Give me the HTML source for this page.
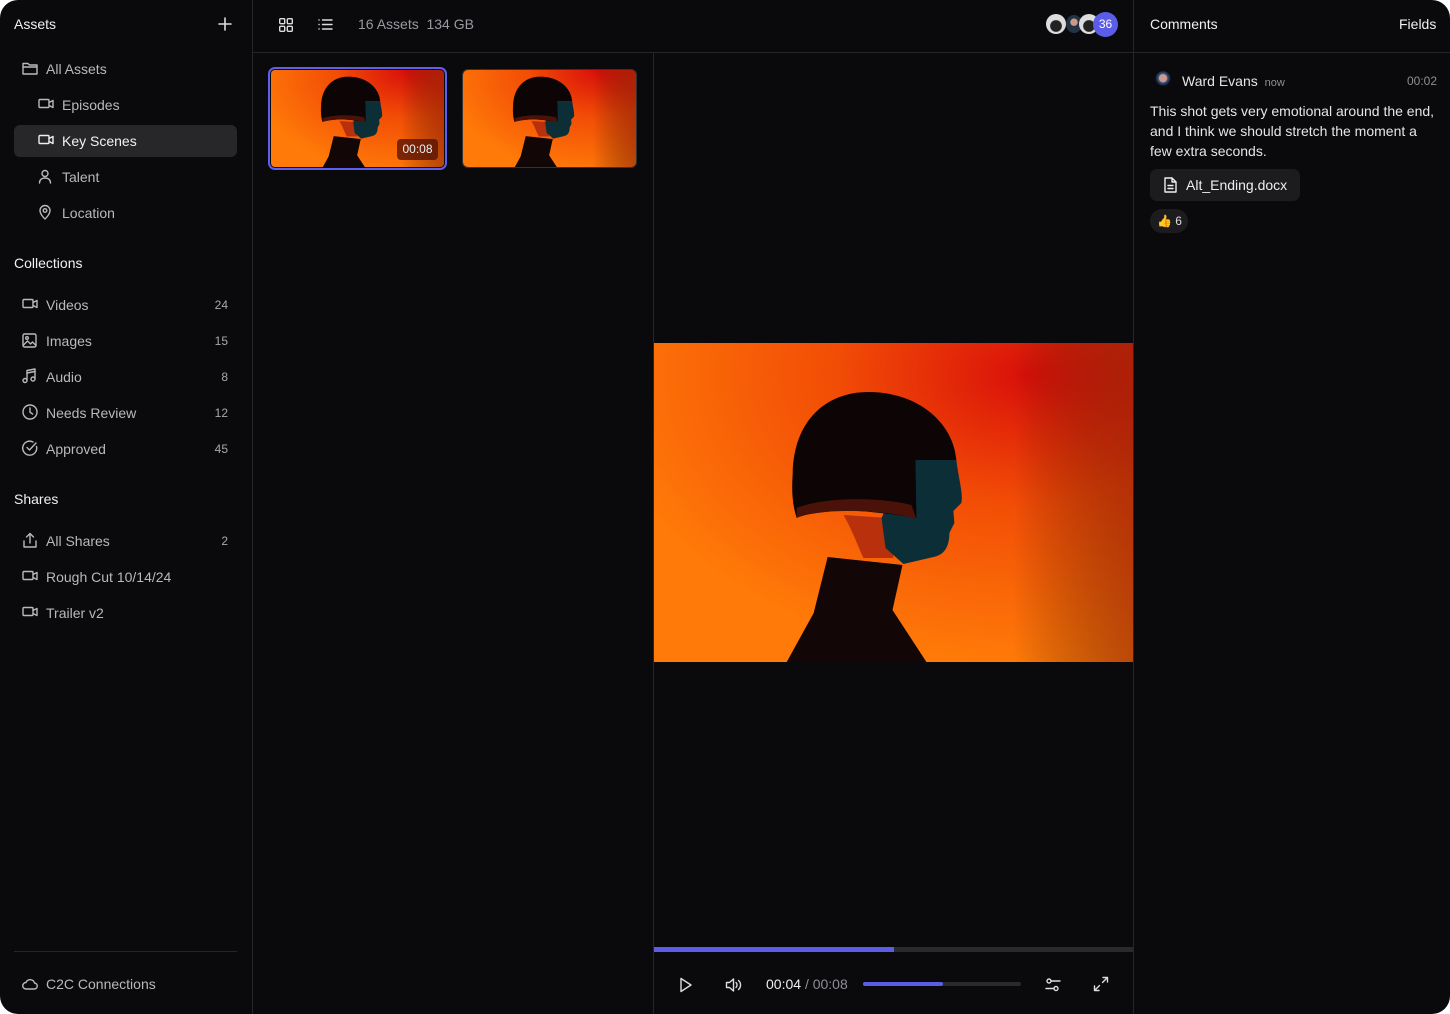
<!DOCTYPE html>
<html><head><meta charset="utf-8"><style>
*{box-sizing:border-box;margin:0;padding:0}
html,body{width:1450px;height:1014px;background:#fff;overflow:hidden}
body{font-family:"Liberation Sans",sans-serif;color:#e6e6e8}
.app{position:absolute;left:0;top:0;width:1450px;height:1014px;background:#0a0a0c;border-radius:18px;overflow:hidden}
.abs{position:absolute}
.side{left:0;top:0;width:253px;height:1014px;border-right:1px solid #26262a}
.t{position:absolute;font-size:14px;color:#b9b9bd;white-space:nowrap}
.h{position:absolute;font-size:14px;color:#f0f0f2}
.ic{position:absolute;fill:none;stroke:#b9b9bd;stroke-width:1.4;stroke-linecap:round;stroke-linejoin:round}
.n{position:absolute;right:24px;font-size:12px;color:#a8a8ad}
.line{position:absolute;background:#26262a}
</style></head><body><div class="app">
<svg width="0" height="0" style="position:absolute"><defs>
<radialGradient id="rg" cx="0.78" cy="0.1" r="0.9"><stop offset="0" stop-color="#d9100a"/><stop offset="0.45" stop-color="#f24d06"/><stop offset="1" stop-color="#ff7a08"/></radialGradient>
<linearGradient id="dk" x1="0" x2="1"><stop offset="0.75" stop-color="#000" stop-opacity="0"/><stop offset="1" stop-color="#6a0a08" stop-opacity="0.45"/></linearGradient>
<symbol id="pic" viewBox="0 0 480 319" preserveAspectRatio="none">
<rect width="480" height="319" fill="url(#rg)"/><rect width="480" height="319" fill="url(#dk)"/>
<path d="M190 172 C200 190 205 205 210 215 L240 215 L235 175 Z" fill="#b8300c"/>
<path d="M255 117 L303 117 C305 135 310 150 308 160 L300 168 L301 180 L296 190 C296 205 290 212 280 214 L250 221 L232 205 L228 175 Z" fill="#0c2f37"/>
<path d="M174 214 L249 222 L239 267 L273 319 L133 319 L160 270 Z" fill="#120606"/>
<path d="M139 130 C140 80 170 49 215 49 C265 49 300 80 303 117 L262 117 L263 175 C230 170 200 166 180 168 C160 170 147 172 143 175 C138 160 138 145 139 130 Z" fill="#0d0505"/>
<path d="M143 175 C165 165 230 166 263 176 L258 162 C215 152 165 156 143 165 Z" fill="#4a1208"/>
</symbol></defs></svg>

<!-- sidebar -->
<div class="abs side">
<div class="h" style="left:14px;top:16px">Assets</div>
<svg class="ic" style="left:218px;top:17px;stroke:#ddd;stroke-width:1.6" width="14" height="14"><path d="M7 1v12M1 7h12"/></svg>
<svg class="ic" style="left:22px;top:61px" width="16" height="14"><path d="M1 2.5h5l1.5 1.5H15v9H1zM1 6h14"/></svg>
<div class="t" style="left:46px;top:61px">All Assets</div>
<svg class="ic" style="left:38px;top:98px" width="16" height="12"><rect x="1" y="1.5" width="10" height="8" rx="1"/><path d="M11 4.5l4-2v7l-4-2"/></svg>
<div class="t" style="left:62px;top:97px">Episodes</div>
<div class="abs" style="left:14px;top:125px;width:223px;height:32px;background:#27272a;border-radius:6px"></div>
<svg class="ic" style="left:38px;top:134px;stroke:#eee" width="16" height="12"><rect x="1" y="1.5" width="10" height="8" rx="1"/><path d="M11 4.5l4-2v7l-4-2"/></svg>
<div class="t" style="left:62px;top:133px;color:#f2f2f4">Key Scenes</div>
<svg class="ic" style="left:38px;top:169px" width="14" height="15"><circle cx="7" cy="4.5" r="3"/><path d="M1.5 14c0-3.5 2.5-5 5.5-5s5.5 1.5 5.5 5"/></svg>
<div class="t" style="left:62px;top:169px">Talent</div>
<svg class="ic" style="left:38px;top:204px" width="14" height="16"><path d="M7 15s5-4.5 5-8.5a5 5 0 0 0-10 0C2 10.5 7 15 7 15z"/><circle cx="7" cy="6.5" r="1.8"/></svg>
<div class="t" style="left:62px;top:205px">Location</div>

<div class="h" style="left:14px;top:255px">Collections</div>
<svg class="ic" style="left:22px;top:298px" width="16" height="12"><rect x="1" y="1.5" width="10" height="8" rx="1"/><path d="M11 4.5l4-2v7l-4-2"/></svg>
<div class="t" style="left:46px;top:297px">Videos</div><div class="n" style="top:298px">24</div>
<svg class="ic" style="left:22px;top:333px" width="15" height="15"><rect x="1" y="1" width="13" height="13" rx="1.5"/><circle cx="5" cy="5" r="1.3"/><path d="M1.5 12l4-4 3 3 2-2 3.5 3.5"/></svg>
<div class="t" style="left:46px;top:333px">Images</div><div class="n" style="top:334px">15</div>
<svg class="ic" style="left:22px;top:368px" width="15" height="16"><path d="M5 12V2.5l8-1.5v9.5"/><circle cx="3" cy="12.5" r="2"/><circle cx="11" cy="11" r="2"/><path d="M5 5l8-1.5"/></svg>
<div class="t" style="left:46px;top:369px">Audio</div><div class="n" style="top:370px">8</div>
<svg class="ic" style="left:22px;top:404px" width="16" height="16"><circle cx="8" cy="8" r="7"/><path d="M8 4v4.2l2.6 1.8"/></svg>
<div class="t" style="left:46px;top:405px">Needs Review</div><div class="n" style="top:406px">12</div>
<svg class="ic" style="left:22px;top:440px" width="16" height="16"><path d="M14.5 6.5A7 7 0 1 1 11 2"/><path d="M5 7.5l2.5 2.5L14 3"/></svg>
<div class="t" style="left:46px;top:441px">Approved</div><div class="n" style="top:442px">45</div>

<div class="h" style="left:14px;top:491px">Shares</div>
<svg class="ic" style="left:22px;top:532px" width="16" height="17"><path d="M8 11V2M4.5 5L8 1.5 11.5 5M2 9v6h12V9"/></svg>
<div class="t" style="left:46px;top:533px">All Shares</div><div class="n" style="top:534px">2</div>
<svg class="ic" style="left:22px;top:570px" width="16" height="12"><rect x="1" y="1.5" width="10" height="8" rx="1"/><path d="M11 4.5l4-2v7l-4-2"/></svg>
<div class="t" style="left:46px;top:569px">Rough Cut 10/14/24</div>
<svg class="ic" style="left:22px;top:606px" width="16" height="12"><rect x="1" y="1.5" width="10" height="8" rx="1"/><path d="M11 4.5l4-2v7l-4-2"/></svg>
<div class="t" style="left:46px;top:605px">Trailer v2</div>

<div class="line" style="left:14px;top:951px;width:223px;height:1px"></div>
<svg class="ic" style="left:22px;top:978px" width="16" height="12"><path d="M4 11h8a3 3 0 0 0 .5-6A4.5 4.5 0 0 0 4 4.5 3.2 3.2 0 0 0 4 11z"/></svg>
<div class="t" style="left:46px;top:976px">C2C Connections</div>
</div>

<!-- top bar -->
<div class="line" style="left:253px;top:52px;width:1197px;height:1px"></div>
<svg class="ic" style="left:279px;top:18px;stroke:#ddd" width="14" height="14"><rect x="0.7" y="0.7" width="5" height="5" rx="1"/><rect x="8.3" y="0.7" width="5" height="5" rx="1"/><rect x="0.7" y="8.3" width="5" height="5" rx="1"/><rect x="8.3" y="8.3" width="5" height="5" rx="1"/></svg>
<svg class="ic" style="left:318px;top:18px;stroke:#ddd" width="15" height="13"><path d="M1 2h.1M1 6.5h.1M1 11h.1M4.5 2H14M4.5 6.5H14M4.5 11H14"/></svg>
<div class="t" style="left:358px;top:16px;color:#9a9aa0">16 Assets &nbsp;134 GB</div>
<div class="abs" style="left:1046px;top:14px;width:20px;height:20px;border-radius:50%;background:radial-gradient(circle at 50% 60%,#222 35%,#ddd 40%)"></div>
<div class="abs" style="left:1066px;top:15px;width:16px;height:18px;border-radius:50%;background:radial-gradient(circle at 50% 40%,#c98 25%,#234 30%)"></div>
<div class="abs" style="left:1079px;top:14px;width:20px;height:20px;border-radius:50%;background:radial-gradient(circle at 50% 60%,#222 35%,#ddd 40%)"></div>
<div class="abs" style="left:1093px;top:12px;width:25px;height:25px;border-radius:50%;background:#5b5ce8;color:#fff;font-size:12px;text-align:center;line-height:25px">36</div>

<!-- grid -->
<div class="line" style="left:653px;top:53px;width:1px;height:961px"></div>
<div class="abs" style="left:268px;top:67px;width:179px;height:103px;border:2px solid #5d5ff0;border-radius:7px;padding:1px"><svg width="173" height="97" style="display:block;border-radius:4px" viewBox="0 0 173 97"><use href="#pic" x="0" y="-11" width="173" height="115"/></svg>
<div class="abs" style="left:127px;top:70px;width:41px;height:21px;background:rgba(80,16,6,.75);border-radius:4px;font-size:12px;color:#eee;text-align:center;line-height:21px">00:08</div></div>
<div class="abs" style="left:462px;top:69px;width:175px;height:99px;border-radius:6px;overflow:hidden;border:1px solid #333"><svg width="173" height="97" style="display:block" viewBox="0 0 173 97"><use href="#pic" x="0" y="-11" width="173" height="115"/></svg></div>

<!-- viewer -->
<div class="line" style="left:1133px;top:0;width:1px;height:1014px"></div>
<svg class="abs" style="left:654px;top:343px" width="479" height="319" viewBox="0 0 479 319"><use href="#pic" width="479" height="319"/></svg>
<div class="abs" style="left:654px;top:947px;width:479px;height:5px;background:#2a2a2e"></div>
<div class="abs" style="left:654px;top:947px;width:240px;height:5px;background:#5b5ce8"></div>
<svg class="ic" style="left:679px;top:977px;stroke:#ddd" width="14" height="16"><path d="M2 1.5l10 6.5-10 6.5z"/></svg>
<svg class="ic" style="left:725px;top:977px;stroke:#ddd" width="18" height="16"><path d="M1.5 5.5h3l4-3.5v12l-4-3.5h-3z"/><path d="M11 5.5a3.5 3.5 0 0 1 0 5M13.5 3.5a6 6 0 0 1 0 9"/></svg>
<div class="t" style="left:766px;top:976px;color:#eee">00:04 <span style="color:#8e8e94">/ 00:08</span></div>
<div class="abs" style="left:863px;top:982px;width:158px;height:4px;border-radius:2px;background:#2a2a2e"></div>
<div class="abs" style="left:863px;top:982px;width:80px;height:4px;border-radius:2px;background:#5b5ce8"></div>
<svg class="ic" style="left:1045px;top:977px;stroke:#ddd" width="16" height="16"><circle cx="4" cy="4" r="2"/><path d="M6 4h9"/><circle cx="11" cy="11.5" r="2"/><path d="M1 11.5h8"/></svg>
<svg class="ic" style="left:1093px;top:976px;stroke:#ddd" width="16" height="16"><path d="M10 1.5h4.5V6M14.5 1.5L9.5 6.5M6 14.5H1.5V10M1.5 14.5l5-5"/></svg>

<!-- comments -->
<div class="h" style="left:1150px;top:16px">Comments</div>
<div class="h" style="left:1399px;top:16px">Fields</div>
<div class="abs" style="left:1155px;top:71px;width:16px;height:18px;border-radius:50%;background:radial-gradient(circle at 50% 40%,#c98 28%,#3a5a90 33%,#0a0a0c 60%)"></div>
<div class="h" style="left:1182px;top:73px;color:#e6e6e8">Ward Evans <span style="font-size:11px;color:#8e8e94">&nbsp;now</span></div>
<div class="t" style="left:1407px;top:74px;font-size:12px;color:#8e8e94">00:02</div>
<div class="abs" style="left:1150px;top:101px;width:292px;font-size:14px;line-height:20px;color:#e6e6e8">This shot gets very emotional around the end, and I think we should stretch the moment a few extra seconds.</div>
<div class="abs" style="left:1150px;top:169px;width:150px;height:32px;background:#1c1c1f;border-radius:7px"></div>
<svg class="ic" style="left:1164px;top:177px;stroke:#eee" width="13" height="16"><path d="M1 1h7l4 4v10H1zM8 1v4h4M4 8.5h5M4 11.5h5"/></svg>
<div class="h" style="left:1186px;top:177px;color:#eee">Alt_Ending.docx</div>
<div class="abs" style="left:1150px;top:209px;width:38px;height:24px;background:#1c1c1f;border-radius:12px;font-size:12px;line-height:24px;padding-left:7px;color:#ddd"><span style="color:#f5b324">👍</span> 6</div>
</div></body></html>
